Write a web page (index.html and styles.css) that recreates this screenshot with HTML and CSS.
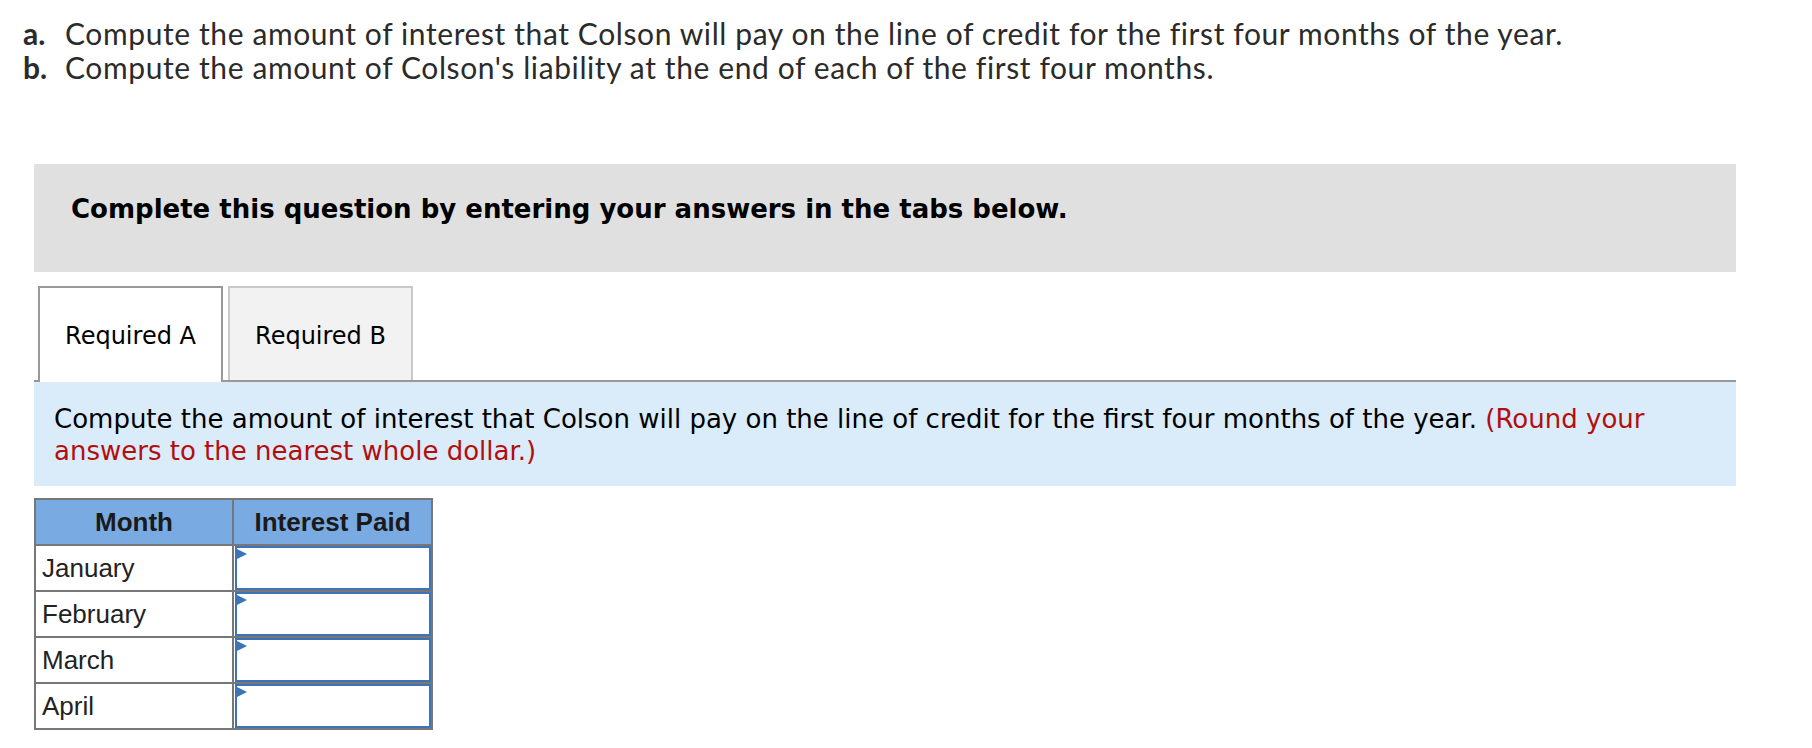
FILE: index.html
```html
<!DOCTYPE html>
<html lang="en">
<head>
    <meta charset="UTF-8">
    <meta name="viewport" content="width=device-width, initial-scale=1.0">
    <title>Colson - Line of Credit</title>
    <link rel="stylesheet" href="styles.css">
</head>
<body>
    <div class="page">
        <ol class="parts">
            <li><span class="part-label">a.</span><span>Compute the amount of interest that Colson will pay on the line of credit for the first four months of the year.</span></li>
            <li><span class="part-label">b.</span><span>Compute the amount of Colson's liability at the end of each of the first four months.</span></li>
        </ol>

        <div class="instructions">Complete this question by entering your answers in the tabs below.</div>

        <div class="tabs">
            <div class="tab active">Required A</div>
            <div class="tab">Required B</div>
        </div>

        <div class="prompt">
            Compute the amount of interest that Colson will pay on the line of credit for the first four months of the year.
            <span class="hint">(Round your answers to the nearest whole dollar.)</span>
        </div>

        <table class="answer-table">
            <thead>
                <tr>
                    <th>Month</th>
                    <th>Interest Paid</th>
                </tr>
            </thead>
            <tbody>
                <tr>
                    <td class="month">January</td>
                    <td class="entry"><div class="field"><input type="text"><span class="marker"></span></div></td>
                </tr>
                <tr>
                    <td class="month">February</td>
                    <td class="entry"><div class="field"><input type="text"><span class="marker"></span></div></td>
                </tr>
                <tr>
                    <td class="month">March</td>
                    <td class="entry"><div class="field"><input type="text"><span class="marker"></span></div></td>
                </tr>
                <tr>
                    <td class="month">April</td>
                    <td class="entry"><div class="field"><input type="text"><span class="marker"></span></div></td>
                </tr>
            </tbody>
        </table>
    </div>
</body>
</html>
```

FILE: styles.css
```css
body {
    margin: 0;
    background-color: white;
    font-family: "DejaVu Sans", Verdana, sans-serif;
}
.page {
    padding: 0 76px 20px 34px;
}
.parts {
    list-style: none;
    margin: 16px 0 0 -11px;
    padding: 0;
    font-family: Lato, "Liberation Sans", sans-serif;
    font-size: 30px;
    line-height: 34px;
    letter-spacing: 0.6px;
    color: #2b2b2b;
}
.parts li {
    display: flex;
}
.part-label {
    width: 42px;
    font-weight: bold;
    letter-spacing: 0;
}
.instructions {
    margin-top: 80px;
    height: 108px;
    box-sizing: border-box;
    padding: 31px 20px 0 37px;
    background-color: #e0e0e0;
    font-size: 26px;
    line-height: 28px;
    font-weight: bold;
    color: black;
}
.tabs {
    display: flex;
    align-items: flex-start;
    gap: 5px;
    margin-top: 14px;
    padding-left: 4px;
    border-bottom: 2px solid #999;
}
.tab {
    width: 185px;
    box-sizing: border-box;
    padding: 34px 0 30px;
    border: 2px solid #c8c8c8;
    border-bottom: none;
    background-color: #f2f2f2;
    text-align: center;
    font-size: 24px;
    line-height: 28px;
    color: black;
}
.tab.active {
    margin-bottom: -2px;
    padding-bottom: 32px;
    border-color: #999;
    background-color: white;
}
.prompt {
    padding: 21px 20px 19px 20px;
    background-color: #daebf9;
    font-size: 26px;
    line-height: 32px;
    color: black;
}
.hint {
    color: #b30e0e;
}
.answer-table {
    margin-top: 12px;
    border-spacing: 0;
    border-top: 2px solid #777;
    border-left: 2px solid #777;
    font-family: "Liberation Sans", Arial, sans-serif;
    font-size: 26px;
    color: #222;
}
.answer-table th,
.answer-table td {
    height: 44px;
    padding: 0;
    border-right: 2px solid #777;
    border-bottom: 2px solid #777;
    line-height: 44px;
}
.answer-table th {
    background-color: #7aaae2;
    color: #1a1a1a;
    font-weight: bold;
}
.answer-table th:first-child {
    width: 196px;
}
.answer-table th:last-child {
    width: 197px;
}
.month {
    padding-left: 6px !important;
    text-align: left;
}
.field {
    position: relative;
    margin: 0 0 0 1px;
}
.field input {
    display: block;
    width: 100%;
    height: 44px;
    box-sizing: border-box;
    margin: 0;
    border: 2px solid #3d74b8;
    padding: 0 6px;
    font-family: "Liberation Sans", Arial, sans-serif;
    font-size: 24px;
    outline: none;
}
.marker {
    position: absolute;
    top: 2px;
    left: 0;
    width: 0;
    height: 0;
    border-top: 6.5px solid transparent;
    border-bottom: 6.5px solid transparent;
    border-left: 12px solid #3d74b8;
}
```
